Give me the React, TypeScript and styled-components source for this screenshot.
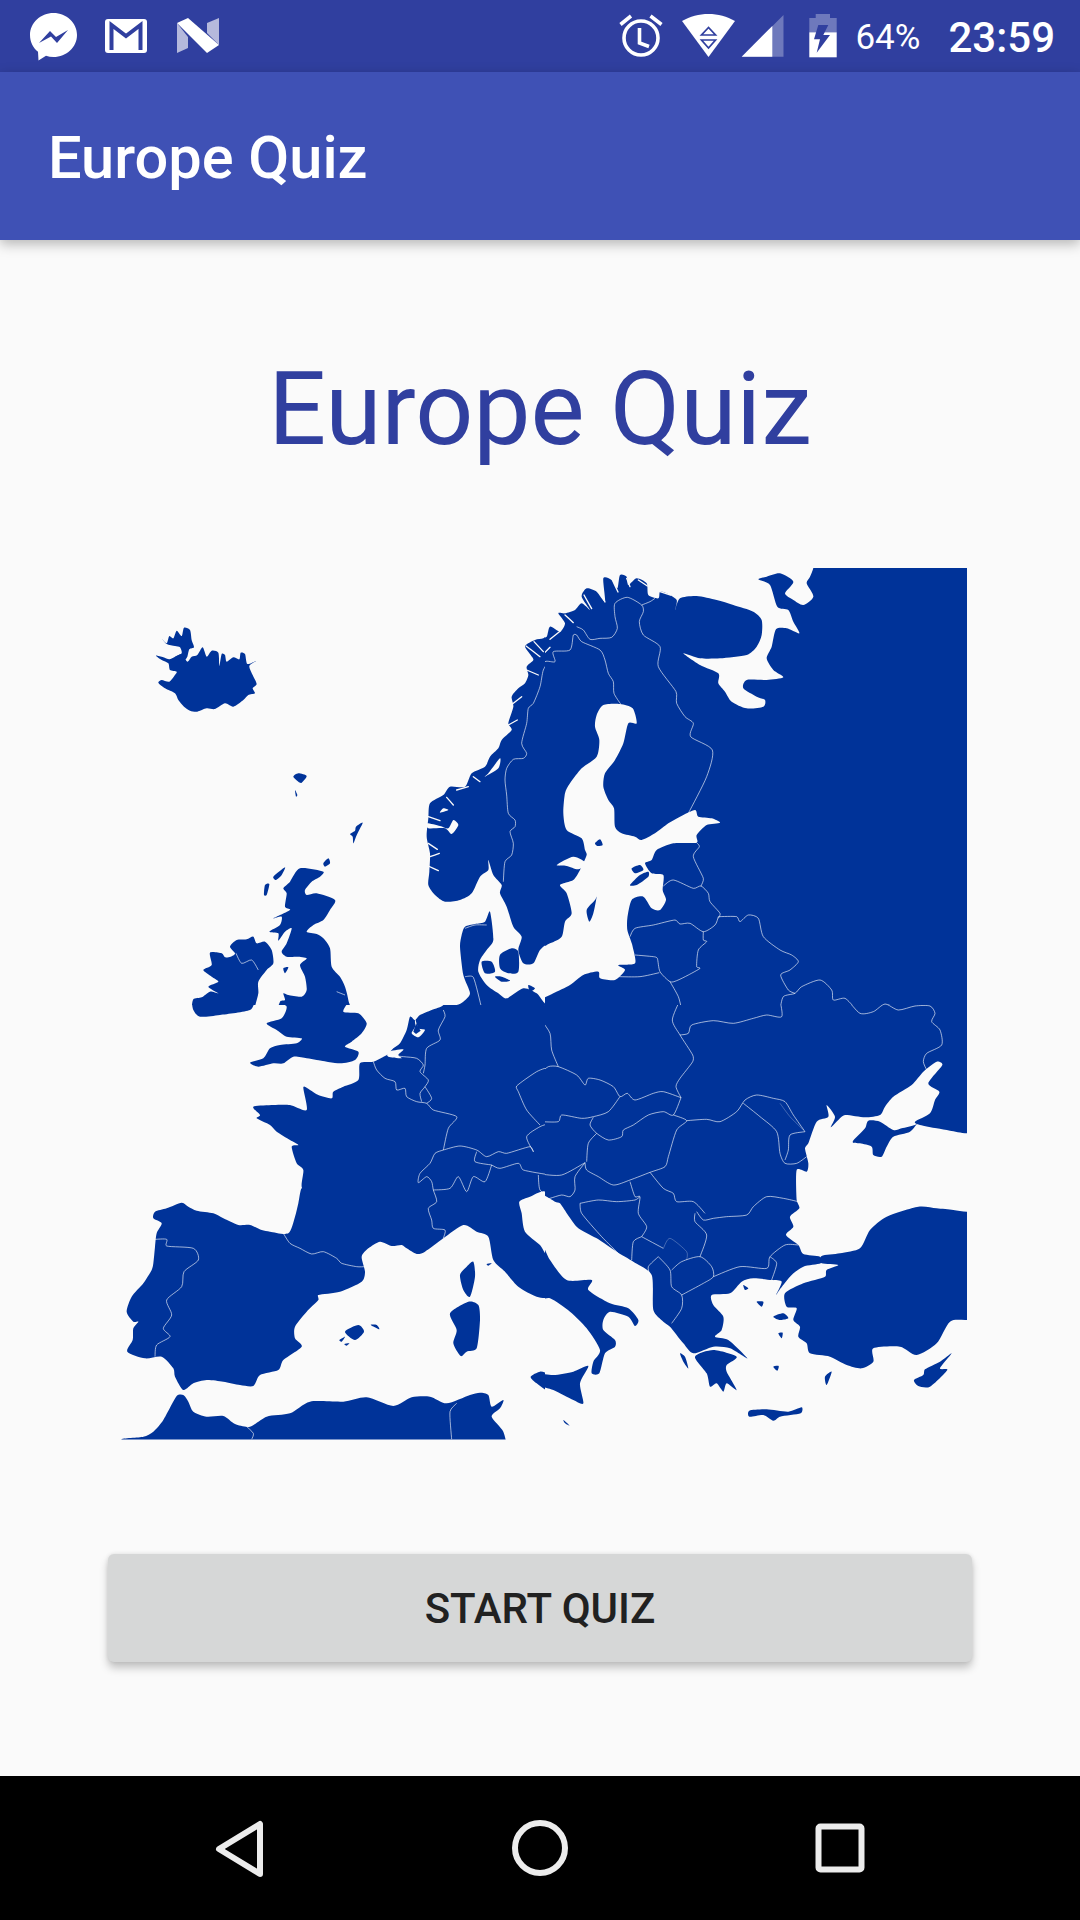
import styled, { createGlobalStyle } from 'styled-components'

const GlobalStyle = createGlobalStyle`
  html, body {
    margin: 0;
    padding: 0;
    background: #fafafa;
    font-family: Roboto, "Liberation Sans", sans-serif;
  }
`

const Screen = styled.div`
  width: 1080px;
  height: 1920px;
  display: flex;
  flex-direction: column;
  overflow: hidden;
`

const StatusBar = styled.div`
  height: 72px;
  background: #303f9f;
  color: #fff;
  display: flex;
  justify-content: space-between;
  align-items: flex-start;
  padding: 0 25px 0 30px;
  box-sizing: border-box;
  flex: none;
`

const StatusGroup = styled.div`
  display: flex;
  align-items: flex-start;
`

const StatusIcon = styled.svg<{ $left?: number; $top: number }>`
  display: block;
  flex: none;
  margin-left: ${({ $left = 0 }) => $left}px;
  margin-top: ${({ $top }) => $top}px;
`

const StatusText = styled.span<{ $left: number; $size: number; $weight: number }>`
  margin-left: ${({ $left }) => $left}px;
  font-size: ${({ $size }) => $size}px;
  font-weight: ${({ $weight }) => $weight};
  line-height: 72px;
  height: 72px;
  margin-top: 2px;
`

const AppBar = styled.header`
  height: 168px;
  flex: none;
  background: #3f51b5;
  color: #fff;
  display: flex;
  align-items: center;
  padding: 4px 0 0 48px;
  box-sizing: border-box;
  font-size: 59.5px;
  font-weight: 500;
  box-shadow: 0 4px 12px rgba(0, 0, 0, 0.28);
  position: relative;
`

const Main = styled.main`
  flex: 1;
  display: flex;
  flex-direction: column;
  align-items: center;
  padding-top: 113px;
`

const Title = styled.h1`
  margin: 0;
  font-size: 102px;
  font-weight: 400;
  line-height: 112px;
  color: #303f9f;
`

const EuropeMap = styled.svg`
  display: block;
  flex: none;
  margin-top: 95px;
`

const Land = styled.path`
  fill: #003399;
`

const Water = styled.path`
  fill: #fafafa;
`

const Fjord = styled.path`
  fill: none;
  stroke: #fafafa;
  stroke-width: 4;
  stroke-linecap: round;
`

const Border = styled.path<{ $faint?: boolean }>`
  fill: none;
  stroke: #fff;
  stroke-opacity: ${({ $faint }) => ($faint ? 0.25 : 0.62)};
  stroke-width: 3;
  stroke-linejoin: round;
`

const StartButton = styled.button`
  width: 864px;
  height: 108px;
  margin-top: 109px;
  flex: none;
  border: 0;
  border-radius: 6px;
  background: #d6d7d7;
  color: #212121;
  font-family: inherit;
  font-size: 42px;
  font-weight: 500;
  box-shadow: 0 6px 8px rgba(0, 0, 0, 0.22), 0 0 4px rgba(0, 0, 0, 0.1);
`

const NavBar = styled.nav`
  height: 144px;
  flex: none;
  background: #000;
  display: flex;
  align-items: flex-start;
  padding: 44px 0 0 215px;
  box-sizing: border-box;
`

const NavIcon = styled.svg<{ $left?: number; $top?: number }>`
  display: block;
  margin-left: ${({ $left = 0 }) => $left}px;
  margin-top: ${({ $top = 0 }) => $top}px;
  fill: none;
  stroke: #ececec;
  stroke-width: 6;
  stroke-linejoin: round;
`

type Tile = {
  x: number
  y: number
  view: string
  land: string[]
  water?: string[]
  fjords?: string[]
  borders: string[]
  faint?: string[]
}

// handle from a point along a direction, never longer than a third of the segment so long edges don't bulge
const handle = (from: number[], dir: number[], to: number[], sign: number) => {
  const seg = Math.hypot(to[0] - from[0], to[1] - from[1])
  const len = Math.hypot(dir[0], dir[1]) / 8
  if (len === 0) return from
  const size = Math.min(len, seg / 3) / Math.hypot(dir[0], dir[1])
  return [from[0] + sign * dir[0] * size, from[1] + sign * dir[1] * size]
}

// turn a traced point list into a soft curve through its points, coasts look too angular otherwise
const curve = (points: string, closed: boolean) => {
  const p = points.split(' ').map((pair) => pair.split(',').map(Number))
  const at = (i: number) => (closed ? p[(i + p.length) % p.length] : p[Math.max(0, Math.min(p.length - 1, i))])
  let d = `M${p[0][0]} ${p[0][1]}`
  const count = closed ? p.length : p.length - 1
  for (let i = 0; i < count; i++) {
    const [a, b, c, e] = [at(i - 1), at(i), at(i + 1), at(i + 2)]
    const c1 = handle(b, [c[0] - a[0], c[1] - a[1]], c, 1)
    const c2 = handle(c, [e[0] - b[0], e[1] - b[1]], b, -1)
    d += `C${c1[0].toFixed(1)} ${c1[1].toFixed(1)} ${c2[0].toFixed(1)} ${c2[1].toFixed(1)} ${c[0]} ${c[1]}`
  }
  return closed ? `${d}Z` : d
}

// traced per quadrant, coordinates are 3x page pixels from the tile origin
const tiles: Tile[] = [
  {
    x: 110,
    y: 560,
    view: '0 0 1305 1335',
    land: [
      // iceland
      '138,287 160,292 178,298 195,290 215,283 232,305 245,290 262,285 278,262 290,290 305,272 325,278 328,318 335,282 345,285 350,305 370,292 388,298 392,278 405,282 412,312 438,303 418,318 428,345 440,372 428,385 435,400 415,405 400,420 370,440 345,430 315,447 290,445 262,455 240,452 222,440 205,420 195,400 165,385 145,368 155,360 178,365 195,345 200,335 180,330 175,310 155,300',
      '155,235 170,250 178,228 190,235 200,212 215,228 222,203 240,210 245,240 252,262 238,268 232,290 222,300 195,292 215,280 210,262 195,258 170,252',
      // faroe, shetland, orkney
      '550,650 565,640 590,648 575,668 565,665',
      '555,690 562,705 558,710',
      '720,822 735,812 738,800 758,788 745,815 738,830 730,850 728,830',
      '640,910 655,895 660,910 645,920',
      // great britain
      '570,925 640,935 630,950 605,965 585,990 590,1005 620,1000 675,1020 660,1050 640,1080 610,1095 590,1115 620,1122 640,1135 660,1165 665,1220 690,1250 705,1280 715,1320 720,1380 505,1380 510,1325 525,1320 520,1300 535,1305 575,1310 590,1290 585,1250 570,1215 590,1195 560,1190 530,1190 515,1175 530,1150 545,1105 525,1115 505,1142 505,1120 478,1115 510,1095 515,1070 490,1075 540,1050 525,1040 530,1000 520,985 540,965',
      '490,950 525,922 515,945 498,960',
      '465,975 478,972 470,1005 462,1005',
      '520,1225 535,1222 525,1240',
      // ireland
      '300,1178 335,1180 345,1192 362,1190 375,1180 360,1160 380,1140 410,1138 430,1130 440,1150 465,1145 485,1170 490,1210 470,1230 445,1265 445,1300 435,1340 430,1380 250,1380 245,1350 250,1318 275,1312 300,1295 325,1300 295,1280 325,1265 305,1250 280,1230 305,1215',
      // norway and sweden
      '1320,220 1300,235 1275,240 1245,258 1262,285 1270,300 1250,320 1255,345 1245,370 1225,385 1205,410 1210,440 1195,490 1205,510 1175,540 1165,565 1140,590 1125,620 1085,640 1065,680 1020,680 1000,705 960,730 955,775 950,830 960,880 958,935 955,975 975,1005 1005,1025 1050,1020 1085,1000 1110,950 1135,930 1135,900 1150,945 1175,975 1170,1000 1190,1040 1210,1100 1235,1130 1225,1170 1240,1210 1270,1210 1290,1170 1320,1150 1400,1150 1400,220',
      // jutland into germany
      '1140,1055 1150,1140 1130,1170 1110,1200 1105,1235 1130,1275 1165,1300 1190,1315 1240,1285 1280,1300 1300,1325 1320,1340 1400,1340 1400,1400 1000,1400 1000,1340 1040,1335 1060,1325 1080,1300 1060,1245 1050,1160 1055,1125 1065,1100 1095,1092 1125,1085',
      '1115,1205 1145,1205 1155,1235 1125,1240',
      '1170,1185 1205,1165 1225,1175 1225,1235 1195,1240 1170,1225',
      '1155,1250 1175,1250 1200,1262 1175,1265',
      '1255,1275 1275,1285 1260,1295',
    ],
    water: [
      '950,790 990,798 1015,805 1030,780 1045,795 1025,822 1005,805 955,805',
      '1135,640 1170,595 1165,625 1125,650',
      '1000,745 1015,750 990,758',
    ],
    fjords: [
      '955,770 990,782',
      '955,850 982,868',
      '960,890 988,880',
      '955,918 985,932',
      '1010,712 1030,735',
      '1040,690 1075,680',
      '1090,650 1110,665',
      '1210,430 1235,410',
      '1195,495 1222,480',
      '1250,330 1285,345',
      '1248,258 1290,290',
      '1272,245 1300,275',
      '1220,300 1228,292',
      '1075,618 1088,615',
    ],
    borders: [
      '1320,300 1300,330 1290,380 1270,430 1255,445 1250,490 1235,550 1250,580 1240,595 1210,598 1190,625 1185,660 1190,705 1195,760 1215,780 1215,800 1200,815 1210,850 1205,885 1185,905 1180,965',
      '378,1180 395,1210 425,1200 445,1230',
      '1065,1250 1090,1252 1115,1345',
      '1065,1105 1095,1095 1130,1095',
      '680,1295 705,1305',
    ],
  },
  {
    x: 545,
    y: 560,
    view: '15 0 1305 1335',
    land: [
      '-20,1165 30,1150 65,1130 75,1085 95,1060 80,1000 60,975 100,960 120,930 140,885 135,870 125,835 80,810 70,760 75,700 90,670 125,625 170,590 178,540 165,500 170,465 190,435 240,432 278,445 290,490 265,490 250,550 225,600 195,640 190,680 205,720 222,745 225,800 245,820 285,830 305,840 345,820 385,790 420,770 465,750 475,770 515,775 540,788 500,795 470,825 470,848 400,850 350,870 335,900 315,910 335,940 370,945 368,990 378,1020 360,1050 335,1045 310,1010 275,1020 262,1075 262,1110 270,1135 278,1160 285,1210 235,1215 255,1230 225,1260 180,1255 175,1235 130,1245 90,1275 40,1300 0,1320 -20,1340 -20,1400 1400,1400 1400,-40 830,-40 820,24 810,50 800,70 820,110 790,135 760,120 735,100 760,65 720,40 680,50 655,58 690,75 712,140 745,150 760,185 778,220 740,205 708,208 695,260 680,295 700,330 730,352 680,360 620,360 610,385 650,410 675,420 670,440 620,445 575,425 555,395 535,370 535,340 480,315 430,280 480,295 540,295 620,285 650,260 665,225 665,180 640,155 580,135 530,120 470,108 420,115 405,150 410,120 380,100 360,95 355,115 325,105 320,70 290,55 265,75 260,50 240,45 232,85 215,60 190,55 195,125 170,95 140,85 125,110 150,150 125,130 105,150 75,160 55,160 75,190 60,215 30,200 20,230 0,235 -20,250',
      '140,1050 165,1020 170,1010 160,1060 148,1085',
      '270,975 300,945 325,935 325,950 290,975',
      '275,925 300,915 310,930 285,940',
      '165,850 180,838 188,855 172,858',
    ],
    water: [
      '50,915 100,890 140,910 115,928 80,918',
      '60,975 100,965 95,978',
      '82,1135 95,1090 90,1125',
      '575,378 590,370 585,385',
    ],
    fjords: [
      '0,292 30,262',
      '30,238 62,212',
      '75,165 100,188',
      '132,105 155,146',
      '172,72 195,126',
      '216,58 234,96',
      '260,55 270,80',
      '295,60 322,78',
      '360,95 392,105',
    ],
    borders: [
      '-20,330 0,340 15,305 45,305 40,275 90,270 100,225 110,225 125,245 180,270 195,300 205,340 220,365 222,400 242,432',
      '110,200 130,210 150,238 180,235 215,232 232,205 225,170 225,130 262,112 305,135 310,155 298,185 310,225 360,260 355,320 408,395 410,430 435,470 460,490 452,530 517,570 500,650 445,760',
      '305,135 330,125 345,115',
      '470,848 478,860 460,890 490,955 483,978',
      '370,978 400,960 460,985 483,978 505,1000 510,1025 540,1060 535,1075',
      '270,1130 285,1105 340,1095 405,1080 420,1092 450,1090 490,1115 525,1095 535,1070',
      '535,1070 590,1070 600,1085 625,1065 655,1075 670,1130 720,1170 755,1185 775,1205 750,1230 722,1245 745,1290 765,1300',
      '490,1115 490,1140 500,1145 475,1170 470,1220 480,1225 445,1245 410,1262 390,1265 360,1235 352,1195 340,1190 285,1185',
      '235,1250 300,1250 358,1238',
      '390,1265 415,1310 425,1350',
      '720,1350 730,1310 765,1300 785,1280 840,1260 875,1290 880,1320 915,1315 945,1345',
      '1010,1350 1035,1332 1075,1345 1125,1340 1170,1340 1175,1350',
    ],
  },
  {
    x: 110,
    y: 1005,
    view: '0 15 1305 1335',
    land: [
      '245,-20 245,0 250,30 270,50 330,45 420,30 435,0 435,-20',
      '718,-20 718,0 700,35 745,40 770,70 755,100 725,125 705,140 745,155 735,180 690,190 620,180 590,175 550,170 520,190 490,190 445,200 420,188 460,175 480,145 510,135 560,130 575,115 530,110 500,90 470,70 515,55 530,20 505,5 505,-20',
      // france, iberia, italy
      '1000,-20 1000,15 965,30 930,45 915,60 900,50 890,90 870,130 850,145 830,165 790,185 750,190 745,240 700,260 670,275 665,295 625,285 600,270 580,262 590,330 540,315 490,315 430,320 450,345 440,355 480,375 500,395 540,420 565,435 545,440 560,490 580,510 575,560 595,600 575,565 565,610 555,650 535,700 480,695 455,690 420,675 385,675 340,655 310,640 260,632 235,620 215,608 170,625 135,635 130,655 155,670 140,700 135,740 130,790 125,810 100,850 65,890 50,935 70,965 85,965 70,985 68,1020 52,1055 105,1075 155,1070 190,1105 195,1130 220,1170 250,1150 290,1140 340,1145 390,1155 430,1158 450,1125 505,1110 520,1080 575,1040 555,1015 555,980 590,935 625,900 625,885 690,875 755,845 765,815 755,770 775,745 810,725 845,738 875,735 890,745 920,762 945,755 1000,715 1060,675 1100,695 1135,710 1150,780 1185,815 1225,860 1280,890 1320,895 1400,895 1400,770 1320,775 1290,735 1245,695 1235,640 1228,605 1260,590 1305,575 1320,640 1400,640 1400,-20',
      // corsica, sardinia, balearics, sicily
      '1090,785 1095,830 1080,890 1060,870 1050,825 1070,800',
      '1075,905 1105,915 1110,960 1100,1045 1070,1055 1052,1068 1030,1030 1040,990 1020,940',
      '705,995 745,975 762,995 735,1020',
      '782,975 800,975 808,988',
      '688,1020 705,1010 695,1025',
      '703,1032 718,1030 710,1037',
      '1130,792 1145,790 1135,797',
      '1262,1130 1290,1115 1320,1120 1400,1120 1400,1180 1320,1175 1280,1150',
      // north africa, runs off the bottom of the map
      '35,1319 100,1310 130,1295 160,1260 200,1188 220,1185 235,1205 250,1235 290,1250 340,1248 375,1272 420,1280 470,1250 540,1240 600,1205 700,1205 770,1192 850,1218 905,1192 960,1190 1010,1210 1080,1185 1110,1178 1135,1185 1145,1220 1180,1200 1170,1225 1145,1250 1180,1295 1180,1345 200,1345',
    ],
    water: [
      '915,55 925,85 945,90 925,112 905,100 915,80',
      '835,155 880,148 865,165 875,175 835,170',
    ],
    fjords: [],
    borders: [
      '790,185 800,210 825,235 855,245 860,270 885,265 890,290 920,305 950,310 970,330 1040,350 1015,385 1000,450',
      '830,165 880,170 920,175 940,195 930,215 955,240 945,260 930,280 935,305',
      '1000,30 1005,50 985,90 990,120 950,145 945,195 940,220',
      '945,260 965,295 950,310',
      '1000,450 975,460 960,490 930,520 925,548 950,530 965,545 970,570 980,605 955,625 965,660 970,685 1005,690 1000,715',
      '970,570 1020,565 1045,530 1070,575 1090,530 1125,545 1145,495',
      '1000,450 1050,438 1100,450 1130,470 1165,455 1190,460 1260,440 1270,455 1250,410 1290,380 1320,370',
      '1145,495 1170,505 1225,490 1240,510 1320,525',
      '1100,455 1095,485 1145,495',
      '1290,375 1250,330 1225,275 1220,258 1280,215 1320,200',
      '520,700 540,730 570,745 605,762 640,755 680,775 695,790 740,800 765,800',
      '135,718 170,718 170,738 250,745 265,780 222,815 215,860 170,900 185,945 160,985 180,1010 140,1035 135,1070',
      '405,1275 430,1300 425,1318',
      '1040,1210 1020,1235 1025,1318',
      '1305,0 1310,50 1320,75',
      '1285,525 1290,570 1320,590',
    ],
  },
  {
    x: 545,
    y: 1005,
    view: '15 15 1305 1335',
    land: [
      // mainland down to the balkans
      '-20,-20 1400,-20 1400,405 1281,400 1230,392 1190,385 1140,375 1125,365 1170,340 1185,300 1198,275 1165,250 1207,195 1190,185 1150,215 1115,255 1060,290 1035,320 1020,345 975,352 915,345 895,360 872,382 885,350 860,315 865,350 830,365 805,430 795,445 805,490 800,515 770,510 770,600 778,625 750,650 760,680 738,705 775,735 790,762 840,770 842,790 790,800 755,825 722,865 708,885 725,845 695,840 640,835 605,845 570,880 515,885 520,915 550,950 545,990 525,1010 565,1020 622,1075 570,1045 520,1040 460,1060 430,1030 390,980 370,965 340,930 335,825 280,785 230,755 170,715 110,680 60,610 45,605 10,585 -20,575',
      // crimea
      '938,425 975,385 985,362 1020,365 1060,390 1085,385 1125,375 1135,365 1110,395 1060,410 1040,440 1025,470 1000,465 995,440 960,430',
      // anatolia
      '1400,635 1281,635 1240,630 1190,625 1135,620 1040,650 990,690 960,745 900,760 845,768 845,790 895,795 860,810 855,830 790,850 735,880 740,920 770,925 760,960 780,980 775,1010 800,1030 810,1060 870,1070 920,1095 965,1105 1000,1085 1000,1045 1080,1040 1130,1065 1190,1030 1230,965 1281,960 1400,955',
      // peloponnese
      '465,1070 520,1050 590,1070 560,1095 560,1115 590,1170 560,1150 550,1175 530,1150 510,1160 500,1120',
      // italy and sicily
      '-20,730 5,730 30,780 80,840 155,840 145,870 210,910 265,925 295,960 285,978 265,950 210,935 190,960 190,990 225,1020 225,1040 195,1060 178,1120 155,1120 160,1085 180,1050 140,985 90,935 30,895 -20,895',
      '-20,1120 40,1125 100,1115 145,1098 120,1150 130,1210 100,1200 40,1170 -20,1150',
      '70,1260 80,1268 90,1278 75,1270',
      // islands
      '628,1232 680,1228 745,1235 785,1222 782,1240 720,1250 700,1262 670,1245 628,1250',
      '855,1130 875,1115 860,1155',
      '1122,1140 1150,1125 1155,1108 1200,1085 1235,1060 1200,1105 1222,1110 1170,1160 1135,1158',
      '650,905 670,905 665,920',
      '610,855 625,865 615,870',
      '700,950 730,940 745,955 720,960',
      '715,1000 728,998 725,1015',
      '700,1100 716,1098 712,1112',
      '420,1060 435,1070 445,1105 430,1085',
    ],
    water: ['150,735 220,762 175,745', '350,970 385,990 365,985'],
    borders: [
      '420,0 397,60 420,105 458,165 458,185 420,235 408,260 423,293',
      '420,105 445,100 455,75 520,62 580,70 640,55 680,45 725,50 720,0',
      '885,0 920,0 960,40 1000,35 1035,12 1075,30 1125,18 1170,18 1185,40 1175,65 1200,90 1205,135 1160,160 1150,185 1160,210',
      '0,220 25,200 55,200 110,225 135,255 145,235 180,240 220,260 240,290 262,280 285,300 340,280 370,275 423,293',
      '55,200 35,150 30,100 5,60 -20,0',
      '240,290 205,335 160,350 125,355 65,345 55,365 0,365',
      '160,352 150,375 170,400 205,420 245,410 250,390 280,375 325,345 370,335 400,345 423,293',
      '400,345 440,362 410,390 385,470 375,500 330,517 270,540 220,555 175,530 140,510 135,488',
      '170,400 145,430 140,485',
      '135,488 65,525 0,522',
      '440,362 500,358 540,365 590,335 615,300 650,285 700,295 735,305 760,345 795,395',
      '610,310 660,350 710,395 720,460 735,490 770,490 800,470',
      '795,395 750,405 745,450 735,480',
      '775,605 730,595 680,590 640,620 620,645 560,650 520,655 490,660 470,635',
      '330,517 370,565 400,580 410,605 460,605 495,640',
      '465,640 465,665 500,705 480,770',
      '135,488 105,530 105,570 90,590 65,585 30,595 10,600',
      '120,610 175,600 230,605 285,600 300,590',
      '270,545 285,590 300,590 295,640 320,680 305,710',
      '305,710 280,725 275,780',
      '120,610 125,640 185,710 240,765',
      '305,710 370,745',
      '355,770 325,800 330,825',
      '355,770 390,810 395,860 425,885 425,925 395,970',
      '395,810 425,785 480,770 515,800 520,830 490,850 425,885',
      '520,830 600,800 680,805 690,770 735,735 775,735',
      '690,770 710,790 695,840',
      '1020,345 1040,370 1080,385',
    ],
    faint: ['370,745 390,715 440,755 440,780', '720,310 750,350 790,390'],
  },
]

const Messenger = () => (
  <StatusIcon $top={13} width={47} height={48} viewBox="30 13 47 48">
    <path d="M53.500 13C66.500 13 77 22.800 77 35C77 47.200 66.500 57 53.500 57C50.800 57 48.300 56.600 46 55.800L38.500 60.500L38 51.800C33 47.800 30 41.800 30 35C30 22.800 40.500 13 53.500 13Z" fill="#fff" />
    <polygon points="39,43 50,31 56,37 68,30 57,43 51,36.500" fill="#303f9f" />
  </StatusIcon>
)

const Gmail = () => (
  <StatusIcon $left={28} $top={19} width={42} height={34} viewBox="105 19 42 34">
    <rect x="105" y="19" width="42" height="34" rx="3" fill="#fff" />
    <polyline points="111.500,50 111.500,25 126,36 140.500,25 140.500,50" fill="none" stroke="#303f9f" strokeWidth="4" />
  </StatusIcon>
)

const NougatLogo = () => (
  <StatusIcon $left={30} $top={18} width={42} height={36} viewBox="177 18 42 36">
    <polygon points="177,23 188,37 188,48 177,53" fill="#b5b9dc" />
    <polygon points="207,23 219,18 219,45 207,33" fill="#b5b9dc" />
    <polygon points="177,23 188,18 219,45 207,53" fill="#fff" />
  </StatusIcon>
)

const Alarm = () => (
  <StatusIcon $top={14} width={44} height={44} viewBox="620 14 44 44">
    <circle cx="642" cy="38" r="17" fill="none" stroke="#fff" strokeWidth="3.600" />
    <path d="M621.500 24.500L632 16M651.500 16L662.500 24.500M640.500 28V43L650 46.500" fill="none" stroke="#fff" strokeWidth="3.600" />
  </StatusIcon>
)

const Wifi = () => (
  <StatusIcon $left={19} $top={14} width={54} height={43} viewBox="683 14 54 43">
    <path d="M683 21C691 16.500 700 14 709.500 14C719 14 728 16.500 736 21L709.500 57Z" fill="#fff" />
    <path d="M709.500 27.500L702.500 35H716.500ZM702.500 40H716.500L709.500 48Z" fill="none" stroke="#303f9f" strokeWidth="1.700" />
  </StatusIcon>
)

const Signal = () => (
  <StatusIcon $left={5} $top={14} width={43} height={43} viewBox="741 14 43 43">
    <polygon points="741.700,56.700 783.500,15 783.500,56.700" fill="#fff" fillOpacity="0.3" />
    <polygon points="741.700,56.700 772.300,26 772.300,56.700" fill="#fff" />
  </StatusIcon>
)

const Battery = () => (
  <StatusIcon $left={25} $top={14} width={28} height={44} viewBox="809 14 28 44">
    <path d="M815.700 14H830V18H836.700V32.300H809.300V18H815.700Z" fill="#fff" fillOpacity="0.3" />
    <rect x="809.300" y="32.300" width="27.400" height="25" fill="#fff" />
    <polygon points="818.300,25 828.300,25 823.300,35 830,35 816.700,52.700 820,39.300 814,39.300" fill="#303f9f" />
  </StatusIcon>
)

export default function App() {
  return (
    <>
      <GlobalStyle />
      <Screen>
        <StatusBar>
          <StatusGroup>
            <Messenger />
            <Gmail />
            <NougatLogo />
          </StatusGroup>
          <StatusGroup>
            <Alarm />
            <Wifi />
            <Signal />
            <Battery />
            <StatusText $left={18} $size={35} $weight={400}>
              64%
            </StatusText>
            <StatusText $left={28} $size={42} $weight={500}>
              23:59
            </StatusText>
          </StatusGroup>
        </StatusBar>
        <AppBar>Europe Quiz</AppBar>
        <Main>
          <Title>Europe Quiz</Title>
          <EuropeMap width={860} height={885} viewBox="110 560 860 885">
            <defs>
              <clipPath id="map-edge">
                <rect x="110" y="568" width="857" height="871.500" />
              </clipPath>
            </defs>
            <g clipPath="url(#map-edge)">
              {tiles.map((tile) => (
                <svg key={tile.view} x={tile.x} y={tile.y} width={435} height={445} viewBox={tile.view}>
                  {tile.land.map((points) => (
                    <Land key={points} d={curve(points, true)} />
                  ))}
                  {tile.water?.map((points) => (
                    <Water key={points} d={curve(points, true)} />
                  ))}
                  {tile.fjords?.map((points) => (
                    <Fjord key={points} d={curve(points, false)} />
                  ))}
                  {tile.borders.map((points) => (
                    <Border key={points} d={curve(points, false)} />
                  ))}
                  {tile.faint?.map((points) => (
                    <Border key={points} d={curve(points, false)} $faint />
                  ))}
                  {tile.y === 1005 && tile.x === 110 && <Land d="M918 70L932 92L918 102L910 95Z" />}
                </svg>
              ))}
            </g>
          </EuropeMap>
          <StartButton>START QUIZ</StartButton>
        </Main>
        <NavBar>
          <NavIcon width={49} height={58} viewBox="0 0 49 58">
            <path d="M45 4V54L4 29Z" />
          </NavIcon>
          <NavIcon $left={248} width={56} height={56} viewBox="0 0 56 56">
            <circle cx="28" cy="28" r="25" />
          </NavIcon>
          <NavIcon $left={247} $top={3} width={50} height={50} viewBox="0 0 50 50">
            <rect x="3.500" y="3.500" width="43" height="43" rx="2" />
          </NavIcon>
        </NavBar>
      </Screen>
    </>
  )
}
